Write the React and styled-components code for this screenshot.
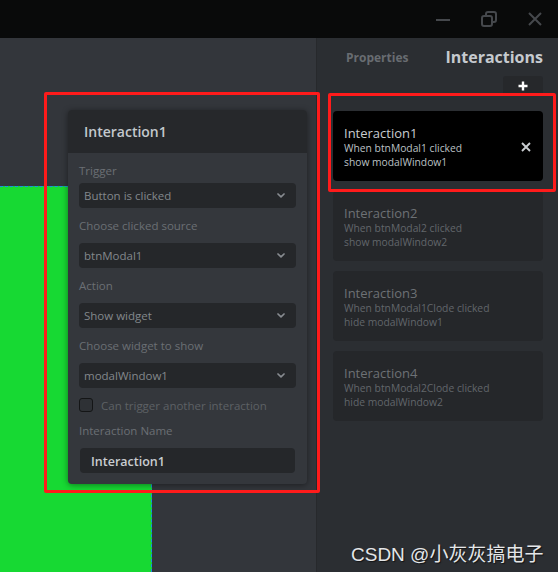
import styled, { createGlobalStyle } from "styled-components";

const GlobalStyle = createGlobalStyle`
  body {
    margin: 0;
    background: #33363b;
    font-family: "Open Sans", "Noto Sans", sans-serif;
  }
`;

const Screen = styled.div`
  position: relative;
  width: 558px;
  height: 572px;
  overflow: hidden;
  display: flex;
  flex-direction: column;
  background: #33363b;
`;

const TitleBar = styled.div`
  height: 38px;
  flex-shrink: 0;
  background: #090a0a;
  display: flex;
  align-items: center;
  justify-content: flex-end;
  gap: 30px;
  padding-right: 15px;
`;

const WinIcon = styled.svg`
  width: 16px;
  height: 16px;
  color: #45484c;
`;

const Main = styled.div`
  position: relative;
  flex: 1;
  display: flex;
`;

const Canvas = styled.div`
  position: relative;
  width: 316px;
  background: #33363b;
`;

const GreenWidget = styled.div`
  position: absolute;
  left: 0;
  top: 148px;
  width: 151px;
  height: 400px;
  background: #17d933;
  border-top: 1px dashed #1b8fe4;
  border-right: 1px dashed #1b8fe4;
`;

/* floating interaction editor */
const Panel = styled.div`
  position: absolute;
  left: 68px;
  top: 72px;
  width: 239px;
  background: #34373c;
  border-radius: 4px;
  box-shadow: 0 1px 6px rgba(0, 0, 0, 0.45);
  overflow: hidden;
`;

const PanelHeader = styled.div`
  height: 43px;
  background: #26282b;
  display: flex;
  align-items: center;
  padding-left: 16px;
  font-size: 14px;
  font-weight: 600;
  color: #c3c8cd;
`;

const PanelBody = styled.div`
  padding: 10px 11px 11px 11px;
  display: flex;
  flex-direction: column;
`;

const FieldLabel = styled.div`
  font-size: 11.5px;
  line-height: 16px;
  color: #6b6f74;
  margin-top: ${(p) => (p.$first ? "0" : "10px")};
  margin-bottom: ${(p) => (p.$first ? "4px" : "9px")};
`;

const Select = styled.div`
  height: 25px;
  box-sizing: border-box;
  background: #25272a;
  border-radius: 4px;
  display: flex;
  align-items: center;
  justify-content: space-between;
  padding: 0 11px 0 5px;
  font-size: 11.5px;
  color: #83878c;
`;

const Chevron = styled.svg`
  width: 8px;
  height: 5px;
  color: #878b90;
`;

const CheckRow = styled.label`
  display: flex;
  align-items: center;
  gap: 8px;
  margin-top: 10px;
  height: 14px;
  font-size: 11.5px;
  color: #5d6165;
`;

const CheckBox = styled.span`
  width: 14px;
  height: 14px;
  box-sizing: border-box;
  border: 1px solid #141516;
  border-radius: 3px;
  background: #2e3135;
`;

const NameInput = styled.div`
  height: 25px;
  margin: 0 1px;
  box-sizing: border-box;
  background: #25272a;
  border-radius: 4px;
  display: flex;
  align-items: center;
  padding: 1px 0 0 11px;
  font-size: 12.5px;
  font-weight: 600;
  color: #c9cdd1;
`;

/* right sidebar */
const Sidebar = styled.div`
  flex: 1;
  background: #2b2e32;
  border-left: 1px solid #27292c;
  display: flex;
  flex-direction: column;
`;

const Tabs = styled.div`
  height: 38px;
  display: flex;
  align-items: center;
  justify-content: space-between;
  padding: 0 15px 0 29px;
`;

const Tab = styled.div`
  font-weight: 700;
  font-size: ${(p) => (p.$active ? "16px" : "12px")};
  color: ${(p) => (p.$active ? "#c6cacf" : "#686c71")};
`;

const AddRow = styled.div`
  display: flex;
  justify-content: flex-end;
  padding-right: 15px;
`;

const AddButton = styled.div`
  width: 40px;
  height: 19px;
  background: #26282b;
  border-radius: 3px;
  display: flex;
  justify-content: center;
  align-items: center;
`;

const List = styled.div`
  display: flex;
  flex-direction: column;
  gap: 10px;
  padding: 16px 15px 0 16px;
`;

const Card = styled.div`
  position: relative;
  height: 70px;
  box-sizing: border-box;
  padding: 14px 11px 0;
  border-radius: 4px;
  background: ${(p) => (p.$selected ? "#000000" : "#25272a")};
`;

const CardTitle = styled.div`
  font-size: 13px;
  line-height: 16px;
  color: ${(p) => (p.$selected ? "#c8ccd0" : "#6d7175")};
`;

const CardLine = styled.div`
  font-size: 10.3px;
  line-height: 14px;
  color: ${(p) => (p.$selected ? "#bcc0c4" : "#62666a")};
`;

const RemoveIcon = styled.svg`
  position: absolute;
  right: 12px;
  top: 31px;
  width: 10px;
  height: 10px;
  color: #c9cdd1;
`;

/* annotations lying over the screen */
const RedFrame = styled.div`
  position: absolute;
  box-sizing: border-box;
  border: 3px solid #ff1b1b;
  border-radius: 2px;
  pointer-events: none;
`;

const Watermark = styled.div`
  position: absolute;
  left: 351px;
  top: 539px;
  font-family: "Liberation Sans", "Noto Sans CJK SC", sans-serif;
  font-size: 19px;
  color: #e4e6e8;
  text-shadow: 1px 1px 1px rgba(0, 0, 0, 0.6);
  white-space: nowrap;
`;

const fields = [
  { label: "Trigger", value: "Button is clicked" },
  { label: "Choose clicked source", value: "btnModal1" },
  { label: "Action", value: "Show widget" },
  { label: "Choose widget to show", value: "modalWindow1" },
];

const interactions = [
  { name: "Interaction1", when: "When btnModal1 clicked", then: "show modalWindow1" },
  { name: "Interaction2", when: "When btnModal2 clicked", then: "show modalWindow2" },
  { name: "Interaction3", when: "When btnModal1Clode clicked", then: "hide modalWindow1" },
  { name: "Interaction4", when: "When btnModal2Clode clicked", then: "hide modalWindow2" },
];

function ChevronDown() {
  return (
    <Chevron viewBox="0 0 8 5">
      <path d="M1 1 L4 3.8 L7 1" fill="none" stroke="currentColor" strokeWidth="1.7" strokeLinecap="round" strokeLinejoin="round" />
    </Chevron>
  );
}

export default function App() {
  return (
    <>
      <GlobalStyle />
      <Screen>
        <TitleBar>
          <WinIcon viewBox="0 0 16 16">
            <path d="M1 9 H15" stroke="currentColor" strokeWidth="2" />
          </WinIcon>
          <WinIcon viewBox="0 0 16 16">
            <path d="M5 4.5 V3 a2 2 0 0 1 2-2 h6 a2 2 0 0 1 2 2 v6 a2 2 0 0 1-2 2 h-1.5" fill="none" stroke="currentColor" strokeWidth="2" />
            <rect x="1" y="5" width="10" height="10" rx="2" fill="none" stroke="currentColor" strokeWidth="2" />
          </WinIcon>
          <WinIcon viewBox="0 0 16 16">
            <path d="M2 2 L14 14 M14 2 L2 14" stroke="currentColor" strokeWidth="2" />
          </WinIcon>
        </TitleBar>

        <Main>
          <Canvas>
            <GreenWidget />
            <Panel>
              <PanelHeader>Interaction1</PanelHeader>
              <PanelBody>
                {fields.map((f, i) => (
                  <div key={f.label}>
                    <FieldLabel $first={i === 0}>{f.label}</FieldLabel>
                    <Select>
                      {f.value}
                      <ChevronDown />
                    </Select>
                  </div>
                ))}
                <CheckRow>
                  <CheckBox />
                  Can trigger another interaction
                </CheckRow>
                <FieldLabel style={{ marginTop: 11 }}>Interaction Name</FieldLabel>
                <NameInput>Interaction1</NameInput>
              </PanelBody>
            </Panel>
          </Canvas>

          <Sidebar>
            <Tabs>
              <Tab>Properties</Tab>
              <Tab $active>Interactions</Tab>
            </Tabs>
            <AddRow>
              <AddButton>
                <svg width="10" height="10" viewBox="0 0 10 10">
                  <path d="M5 0.5 V9.5 M0.5 5 H9.5" stroke="#ffffff" strokeWidth="2.4" />
                </svg>
              </AddButton>
            </AddRow>
            <List>
              {interactions.map((it, i) => (
                <Card key={it.name} $selected={i === 0}>
                  <CardTitle $selected={i === 0}>{it.name}</CardTitle>
                  <CardLine $selected={i === 0}>{it.when}</CardLine>
                  <CardLine $selected={i === 0}>{it.then}</CardLine>
                  {i === 0 && (
                    <RemoveIcon viewBox="0 0 10 10">
                      <path d="M1 1 L9 9 M9 1 L1 9" stroke="currentColor" strokeWidth="1.9" />
                    </RemoveIcon>
                  )}
                </Card>
              ))}
            </List>
          </Sidebar>

          <RedFrame style={{ left: 44, top: 54, width: 276, height: 401 }} />
          <RedFrame style={{ left: 328, top: 55, width: 228, height: 99 }} />
        </Main>

        <Watermark>CSDN @小灰灰搞电子</Watermark>
      </Screen>
    </>
  );
}
